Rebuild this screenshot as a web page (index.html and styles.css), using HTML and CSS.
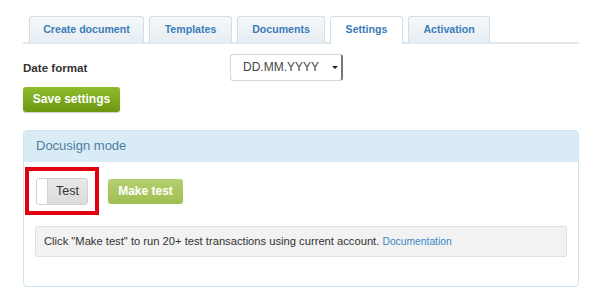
FILE: index.html
```html
<!DOCTYPE html>
<html>
<head>
	<meta charset="UTF-8">
	<title>Settings</title>
	<link rel="stylesheet" href="styles.css">
</head>
<body>
	<div id="wrap">
		<ul class="tabs">
			<li class="tab">Create document</li>
			<li class="tab">Templates</li>
			<li class="tab">Documents</li>
			<li class="tab active">Settings</li>
			<li class="tab">Activation</li>
		</ul>
		<div class="row">
			<span class="label">Date format</span>
			<span class="select">DD.MM.YYYY<i class="arrow"></i></span>
		</div>
		<a class="btn save">Save settings</a>
		<div class="panel">
			<div class="panel-head">Docusign mode</div>
			<div class="panel-body">
				<div class="controls">
					<span class="mark">
						<span class="toggle"><i class="knob"></i><span class="toggle-text">Test</span></span>
					</span>
					<a class="btn make">Make test</a>
				</div>
				<div class="note">Click "Make test" to run 20+ test transactions using current account. <a class="link">Documentation</a></div>
			</div>
		</div>
	</div>
</body>
</html>
```

FILE: styles.css
```css
*{margin:0;padding:0;box-sizing:border-box;}
li{list-style:none;}
body{
	font-family:"Liberation Sans",Arial,sans-serif;
	font-size:12px;
	color:#333;
	background:#fff;
}
#wrap{
	width:556px;
	margin-left:23px;
	padding-top:16px;
}
/* tabs */
.tabs{
	display:flex;
	gap:5px;
	padding-left:6px;
	border-bottom:2px solid #dfe7ec;
	height:28px;
}
.tab{
	height:27px;
	line-height:25px;
	text-align:center;
	white-space:nowrap;
	font-size:10.6px;
	font-weight:bold;
	color:#3b7cba;
	background:linear-gradient(#f5f8fa,#e6edf2);
	border:1px solid #d2dde4;
	border-bottom:none;
	border-radius:3px 3px 0 0;
}
.tab:nth-child(1){width:115px;}
.tab:nth-child(2){width:83px;}
.tab:nth-child(3){width:88px;}
.tab:nth-child(4){width:73px;}
.tab:nth-child(5){width:82px;}
.tab.active{
	background:#fff;
	height:28px;
}
/* date format */
.row{
	display:flex;
	align-items:center;
	margin-top:10px;
	height:27px;
}
.label{
	width:207px;
	font-weight:bold;
	font-size:11.6px;
	color:#333;
}
.select{
	position:relative;
	width:113px;
	height:27px;
	line-height:25px;
	padding-left:12px;
	font-size:12px;
	color:#444;
	border:1px solid #d6d6d6;
	border-right:2px solid #777;
	border-radius:3px;
	background:#fff;
}
.arrow{
	position:absolute;
	right:3px;
	top:11px;
	border:3px solid transparent;
	border-top:3px solid #222;
}
.btn{
	display:inline-block;
	font-weight:bold;
	font-size:12px;
	color:#fff;
	text-align:center;
	border-radius:3px;
	cursor:pointer;
}
.save{
	margin-top:6px;
	width:97px;
	height:25px;
	line-height:25px;
	background:linear-gradient(#8fbd2d,#6c9612);
	box-shadow:0 1px 1px rgba(0,0,0,.2);
}
/* panel */
.panel{
	margin-top:18px;
	border:1px solid #cfe4f1;
	border-radius:4px;
	height:157px;
}
.panel-head{
	height:31px;
	line-height:30px;
	padding-left:12px;
	font-size:13px;
	color:#4e7ea1;
	background:#d9ebf5;
}
.panel-body{
	padding:0 11px;
}
.controls{
	display:flex;
	align-items:center;
	gap:9px;
	margin-top:5px;
}
.mark{
	display:inline-block;
	border:4px solid #e0000f;
	padding:7px 7px 6px;
	margin-left:-10px;
}
.toggle{
	display:flex;
	align-items:stretch;
	width:52px;
	height:27px;
	border:1px solid #d0d0d0;
	border-radius:3px;
	background:linear-gradient(#e8e8e8,#dcdcdc);
	overflow:hidden;
}
.knob{
	width:11px;
	background:#fff;
	border-right:1px solid #d4d4d4;
}
.toggle-text{
	flex:1;
	text-align:center;
	line-height:25px;
	font-size:12.5px;
	color:#333;
}
.make{
	width:75px;
	height:25px;
	line-height:25px;
	background:linear-gradient(#b4cf70,#9fbf50);
}
.note{
	margin-top:11px;
	height:31px;
	line-height:29px;
	padding-left:8px;
	background:#f2f2f2;
	border:1px solid #e0e0e0;
	border-radius:2px;
	font-size:11.2px;
	color:#333;
}
.link{
	font-size:10.3px;
	color:#3a86c8;
}
```
